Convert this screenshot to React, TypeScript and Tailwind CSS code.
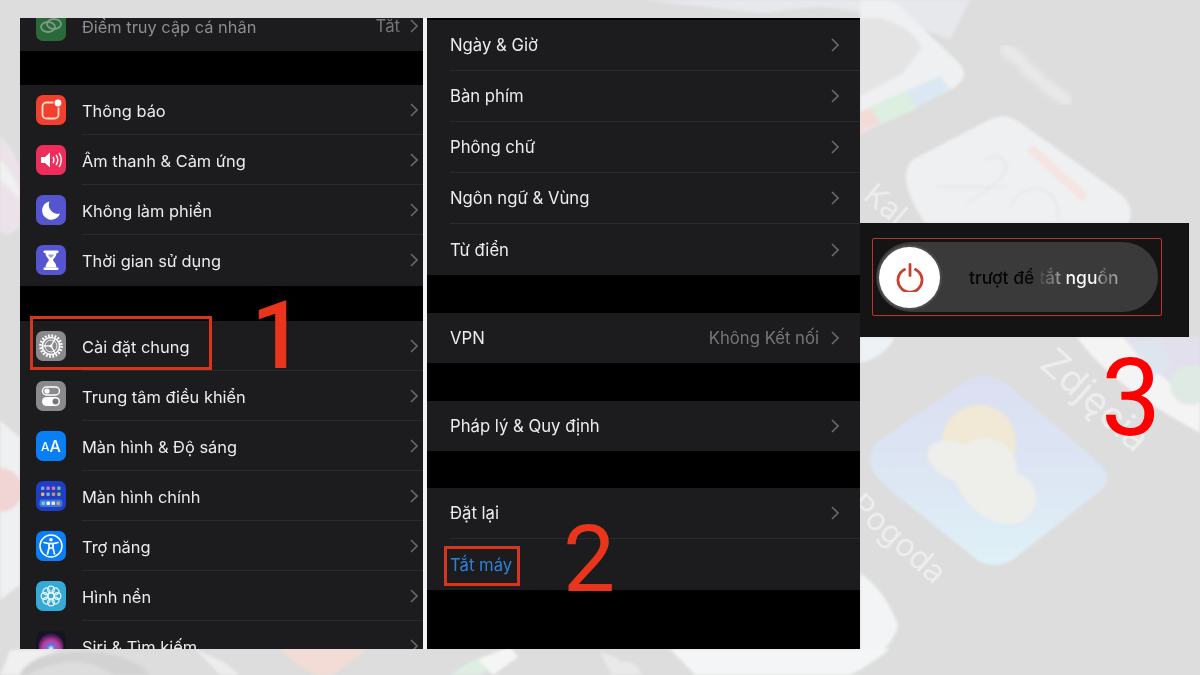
import React from "react";

const IconBox: React.FC<{ bg: string; children: React.ReactNode }> = ({ bg, children }) => (
	<svg viewBox="0 0 30 30" className="w-[30px] h-[30px] shrink-0">
		<rect width="30" height="30" rx="7" fill={bg} />
		{children}
	</svg>
);

const Chevron = () => (
	<svg viewBox="0 0 8 14" className="w-[8px] h-[14px] shrink-0" fill="none" stroke="#68686c" strokeWidth="1.6">
		<path d="M1 1l6 6-6 6" />
	</svg>
);

const HotspotIcon = () => (
	<IconBox bg="#2f8a47">
		<g fill="none" stroke="#a5d3b0" strokeWidth="1.8">
			<ellipse cx="12" cy="16" rx="7" ry="5" />
			<ellipse cx="18" cy="13" rx="7" ry="5" />
		</g>
	</IconBox>
);

const NotifyIcon = () => (
	<IconBox bg="#f2402e">
		<rect x="6.500" y="7.500" width="16" height="16" rx="4" fill="none" stroke="#ffd9d2" strokeWidth="1.800" />
		<circle cx="22" cy="8" r="4.600" fill="#f2402e" />
		<circle cx="22" cy="8" r="3.400" fill="#fff" />
	</IconBox>
);

const SoundIcon = () => (
	<IconBox bg="#ee2d5b">
		<path d="M5 12h4l5-4.500v15L9 18H5z" fill="#fff" />
		<g fill="none" stroke="#fff" strokeWidth="1.400">
			<path d="M17 12c1.200 1.800 1.200 4.200 0 6" />
			<path d="M20 10c2.200 3 2.200 7 0 10" />
			<path d="M23 8c3 4 3 10 0 14" />
		</g>
	</IconBox>
);

const MoonIcon = () => (
	<IconBox bg="#5655d0">
		<path d="M13.500 6.500A9.200 9.200 0 1 0 24 18.600 9 9 0 0 1 13.500 6.500z" fill="#fff" />
	</IconBox>
);

const HourglassIcon = () => (
	<IconBox bg="#5655d0">
		<rect x="7.500" y="5.500" width="15" height="2.400" rx="1" fill="#fff" />
		<rect x="7.500" y="22.500" width="15" height="2.400" rx="1" fill="#fff" />
		<path d="M9.500 8h11c0 4-3.400 5.500-3.400 7s3.400 3 3.400 7.500h-11c0-4.500 3.400-6 3.400-7.500S9.500 12 9.500 8z" fill="#fff" />
		<path d="M12 9.500h6c-.5 1.500-2 2.500-3 3.500-1-1-2.500-2-3-3.500z" fill="#9d9ce6" />
	</IconBox>
);

const GearIcon = () => (
	<IconBox bg="#8a8a8e">
		<circle cx="15" cy="15" r="10.500" fill="none" stroke="#fff" strokeWidth="2.600" strokeDasharray="1.800 1.500" />
		<circle cx="15" cy="15" r="8.600" fill="none" stroke="#fff" strokeWidth="1.500" />
		<circle cx="15" cy="15" r="6" fill="none" stroke="#fff" strokeWidth="0.900" />
		<g stroke="#fff" strokeWidth="1.300">
			<path d="M15 15H7" />
			<path d="M15 15l4-6.900" />
			<path d="M15 15l4 6.900" />
		</g>
		<circle cx="15" cy="15" r="1.500" fill="#fff" />
	</IconBox>
);

const ControlIcon = () => (
	<IconBox bg="#8a8a8e">
		<rect x="6.500" y="6" width="17" height="8" rx="4" fill="none" stroke="#fff" strokeWidth="1.400" />
		<circle cx="11" cy="10" r="2.600" fill="#fff" />
		<rect x="6" y="16" width="18" height="9" rx="4.500" fill="#fff" />
		<circle cx="19.500" cy="20.500" r="3" fill="#77777b" />
	</IconBox>
);

const DisplayIcon = () => (
	<div className="w-[30px] h-[30px] shrink-0 rounded-[7px] bg-[#0a7ff5] flex items-center justify-center text-white leading-none">
		<span className="text-[12px] font-medium mt-[2px]">A</span>
		<span className="text-[16px] font-medium">A</span>
	</div>
);

const HomeIcon = () => {
	const rows = [
		["#7fa8f0", "#c07ad8", "#e070b0", "#70c0a0"],
		["#f0b060", "#60c0d0", "#e08080", "#90c070"],
	];
	return (
		<IconBox bg="#1e3fc4">
			{rows.map((row, y) =>
				row.map((c, x) => <rect key={`${x}${y}`} x={5 + x * 5.4} y={5.5 + y * 6} width="3.400" height="3.400" rx="1" fill={c} />)
			)}
			<rect x="3.500" y="18.500" width="23" height="7.500" rx="2.500" fill="#3f78d8" />
			<rect x="5.500" y="20.500" width="3.500" height="3.500" rx="1" fill="#6fc8e8" />
			<rect x="10.500" y="20.500" width="3.500" height="3.500" rx="1" fill="#fff" />
			<rect x="15.500" y="20.500" width="3.500" height="3.500" rx="1" fill="#e8e8f0" />
			<rect x="20.500" y="20.500" width="3.500" height="3.500" rx="1" fill="#d0a080" />
		</IconBox>
	);
};

const AccessIcon = () => (
	<IconBox bg="#0a7ff5">
		<circle cx="15" cy="15" r="11" fill="none" stroke="#fff" strokeWidth="1.500" />
		<circle cx="15" cy="8.800" r="1.800" fill="#fff" />
		<path d="M8 11.500l5 1.200v4L11.500 23M22 11.500l-5 1.200v4L18.500 23M13 12.700h4M13.500 17h3" fill="none" stroke="#fff" strokeWidth="1.700" strokeLinecap="round" />
	</IconBox>
);

const WallpaperIcon = () => (
	<IconBox bg="#35a9d8">
		<g fill="none" stroke="#e6f7fb" strokeWidth="1.200">
			<circle cx="15" cy="15" r="3" />
			{[0, 45, 90, 135, 180, 225, 270, 315].map((a) => (
				<circle key={a} cx="15" cy="8.500" r="3.300" transform={`rotate(${a} 15 15)`} />
			))}
		</g>
	</IconBox>
);

const SiriIcon = () => (
	<svg viewBox="0 0 30 30" className="w-[30px] h-[30px] shrink-0">
		<defs>
			<radialGradient id="siri" cx="50%" cy="60%" r="55%">
				<stop offset="0%" stopColor="#ffffff" />
				<stop offset="25%" stopColor="#5a7ae0" />
				<stop offset="60%" stopColor="#c03aa0" />
				<stop offset="100%" stopColor="#3a1a50" />
			</radialGradient>
		</defs>
		<rect width="30" height="30" rx="7" fill="#17141f" />
		<circle cx="15" cy="15" r="12.500" fill="url(#siri)" />
	</svg>
);

const Row: React.FC<{
	icon?: React.ReactNode;
	label: string;
	value?: string;
	dim?: boolean;
	blue?: boolean;
	last?: boolean;
	height?: string;
	right?: boolean;
}> = ({ icon, label, value, dim, blue, last, height, right }) => (
	<div className={`flex items-center ${height ?? "h-[50px]"} ${right ? "pl-[23px]" : "pl-[16px]"}`}>
		{icon && <div className={`mr-[16px] ${dim ? "opacity-70" : ""}`}>{icon}</div>}
		<div
			className={`flex-1 h-full flex items-center border-[#2b2b2d] ${last ? "" : "border-b"} ${right ? "pr-[21px]" : "pr-[5px]"}`}
		>
			<span
				className={`flex-1 whitespace-nowrap ${right ? "pt-[2px] text-[16.7px]" : "pt-[3px] text-[16.4px]"} ${
					blue ? "text-[#2f80d8]" : dim ? "text-[#8e8e8e]" : "text-[#ececec]"
				}`}
			>
				{label}
			</span>
			{value && <span className={`pt-[2px] text-[16.7px] text-[#77777a] ${right ? "mr-[12px]" : "mr-[10px]"}`}>{value}</span>}
			{!blue && <Chevron />}
		</div>
	</div>
);

const Wallpaper = () => (
	<svg viewBox="0 0 1200 675" className="absolute inset-0 w-[1200px] h-[675px]">
		<defs>
			<filter id="soft"><feGaussianBlur stdDeviation="1.500" /></filter>
			<filter id="softer"><feGaussianBlur stdDeviation="3" /></filter>
			<linearGradient id="weather" x1="0.500" y1="0" x2="0.500" y2="1">
				<stop offset="0%" stopColor="#dbdff2" />
				<stop offset="55%" stopColor="#dde6f3" />
				<stop offset="100%" stopColor="#dff1f7" />
			</linearGradient>
		</defs>
		<g filter="url(#soft)">
			{/* top */}
			<path d="M640 0h330l-20 40-60-25-70-8-60 6z" fill="#e6e8ec" />
			{/* app with colour bars */}
			<path d="M860 0h33l65 62q14 14 -4 26L860 134z" fill="#eef0f1" />
			<path d="M860 18h20q34 10 42 30 l-20 26L860 96z" fill="#e4e4e5" />
			<path d="M860 112l11-5 14 14-25 12z" fill="#f3dcd8" />
			<path d="M870 107l36-16 12 17-36 16z" fill="#dcefe0" />
			<path d="M906 91l34-15 10 13-34 18z" fill="#dbe8f3" />
			{/* calendar */}
			<path d="M912 160 L985 122 Q1005 110 1022 124 L1122 195 Q1136 210 1128 223 L925 223 Q895 178 912 160z" fill="#eff0f1" />
			<path d="M1030 148l55 50" stroke="#f5e4e1" strokeWidth="9" />
			<path d="M936 187l70 0M985 160q18 -10 22 8q-5 15 -40 35M1012 205a22 22 0 1 1 45 15" fill="none" stroke="#e3e6e8" strokeWidth="2" />
			{/* photos ring */}
			<path d="M1077 337 Q1110 385 1200 433 V400 Q1165 385 1123 337z" fill="#f4f4f4" />
			<path d="M1123 337 Q1165 385 1200 402 V337z" fill="#e2e0ec" />
			<path d="M1130 345l30 -8 12 30 -20 10z" fill="#dfe5ef" />
			<circle cx="1190" cy="385" r="20" fill="#dfeae4" />
			<path d="M860 337h35q-10 20 -35 26z" fill="#eff2f4" />
			{/* weather */}
			<path d="M880 440 L965 382 Q985 368 1008 385 L1098 462 Q1118 480 1095 495 L1015 558 Q998 570 980 562 L890 490 Q856 462 880 440z" fill="url(#weather)" />
			<circle cx="979" cy="442" r="37" fill="#f1e8d5" />
			<g fill="#eeeeea">
				<ellipse cx="958" cy="462" rx="32" ry="19" transform="rotate(22 958 462)" />
				<circle cx="985" cy="470" r="32" />
				<ellipse cx="990" cy="494" rx="38" ry="22" transform="rotate(40 990 494)" />
				<circle cx="1010" cy="498" r="26" />
			</g>
			{/* bottom right app */}
			<path d="M860 573 Q885 590 898 625 Q895 645 860 670z" fill="#f2f4f5" />
			<path d="M670 649 H890 Q870 665 850 675 H695z" fill="#f3f5f6" />
			<path d="M600 652 q14 4 22 10 q14 -2 20 13 h-30z" fill="#ececec" opacity="0.800" />
			{/* left strip */}
			<path d="M0 135 Q14 150 20 168 V225 Q10 240 0 232z" fill="#ece3ea" />
			<path d="M0 160 Q10 170 20 190 V200 Q8 185 0 180z" fill="#f1f1f1" />
			<path d="M0 420 L20 438 V585 L0 600z" fill="#eff0f1" />
			<circle cx="0" cy="490" r="22" fill="#f1d4d4" />
			{/* bottom strip */}
			<path d="M0 675 Q35 650 100 652 Q140 660 150 675 H115 Q90 660 70 662 Q40 665 30 675z" fill="#d2d2d2" />
			<path d="M0 675 Q5 665 10 650h50Q25 660 20 675z" fill="#f0f0f0" />
			<path d="M278 649h90l-35 26h-20z" fill="#f3dcd5" />
			<path d="M195 649l30 14 15 12h-20z" fill="#ededed" />
			<path d="M450 675l25-16 30 0 -25 16z" fill="#dcefe2" />
			<path d="M478 659l32-12 8 10-25 18z" fill="#f5f5f5" />
		</g>
		<path d="M1006 50l14 10M1026 68l12 10M1046 86l20 14" stroke="#e9e9e9" strokeWidth="13" strokeLinecap="round" filter="url(#softer)" />
		<g fill="#ededed" fontFamily="Inter, sans-serif">
			<text x="1038" y="366" fontSize="38" transform="rotate(42 1038 366)">Zdjęcia</text>
			<text x="862" y="198" fontSize="30" transform="rotate(40 862 198)">Kal</text>
			<text x="848" y="508" fontSize="32" transform="rotate(42 848 508)">Pogoda</text>
		</g>
	</svg>
);

const App: React.FC = () => {
	return (
		<div className="relative w-[1200px] h-[675px] overflow-hidden bg-[#dddddd] font-['Inter',sans-serif]">
			<Wallpaper />

			<div className="relative flex items-start pt-[18px] pl-[20px]">
				{/* step 1 */}
				<div className="w-[403px] h-[631px] overflow-hidden bg-black blur-[0.4px]">
					<div className="-mt-[18px] bg-[#1c1c1e]">
						<Row icon={<HotspotIcon />} label="Điểm truy cập cá nhân" value="Tắt" dim last height="h-[51px]" />
					</div>
					<div className="mt-[34px] bg-[#1c1c1e] h-[201px]">
						<Row icon={<NotifyIcon />} label="Thông báo" />
						<Row icon={<SoundIcon />} label="Âm thanh & Cảm ứng" />
						<Row icon={<MoonIcon />} label="Không làm phiền" />
						<Row icon={<HourglassIcon />} label="Thời gian sử dụng" last />
					</div>
					<div className="mt-[35px] bg-[#1c1c1e]">
						<Row icon={<GearIcon />} label="Cài đặt chung" />
						<Row icon={<ControlIcon />} label="Trung tâm điều khiển" />
						<Row icon={<DisplayIcon />} label="Màn hình & Độ sáng" />
						<Row icon={<HomeIcon />} label="Màn hình chính" />
						<Row icon={<AccessIcon />} label="Trợ năng" />
						<Row icon={<WallpaperIcon />} label="Hình nền" />
						<Row icon={<SiriIcon />} label="Siri & Tìm kiếm" last />
					</div>
				</div>

				<div className="w-[4px] h-[631px] bg-[#f2f2f2]" />

				{/* step 2 */}
				<div className="w-[433px] h-[631px] overflow-hidden bg-black pt-[2px] blur-[0.4px]">
					<div className="bg-[#1c1c1e]">
						<Row right height="h-[51px]" label="Ngày & Giờ" />
						<Row right height="h-[51px]" label="Bàn phím" />
						<Row right height="h-[51px]" label="Phông chữ" />
						<Row right height="h-[51px]" label="Ngôn ngữ & Vùng" />
						<Row right height="h-[51px]" label="Từ điển" last />
					</div>
					<div className="mt-[38px] bg-[#1c1c1e]">
						<Row right label="VPN" value="Không Kết nối" last />
					</div>
					<div className="mt-[38px] bg-[#1c1c1e]">
						<Row right label="Pháp lý & Quy định" last />
					</div>
					<div className="mt-[37px] bg-[#1c1c1e]">
						<Row right height="h-[51px]" label="Đặt lại" />
						<Row right height="h-[51px]" label="Tắt máy" blue last />
					</div>
				</div>

				{/* step 3 */}
				<div className="mt-[205px] w-[329px] h-[114px] bg-[#141414] pl-[12px] pt-[15px]">
					<div className="w-[290px] h-[78px] border border-[#b8392b] rounded-[2px] pl-[3px] pt-[3px]">
						<div className="w-[282px] h-[70px] rounded-full bg-[#3a3a3a] flex items-center pl-[3px]">
							<div className="w-[61px] h-[61px] rounded-full bg-white shadow-[0_0_0_2px_#4d4d4d] flex items-center justify-center shrink-0">
								<svg viewBox="0 0 30 30" className="w-[30px] h-[30px]" fill="none" stroke="#c9402f" strokeWidth="2.800" strokeLinecap="round">
									<path d="M9.500 7.500a12 12 0 1 0 11 0" />
									<path d="M15 2.500v11" />
								</svg>
							</div>
							<span className="ml-[29px] pt-[2px] text-[17.500px] font-medium whitespace-nowrap text-transparent bg-clip-text bg-[linear-gradient(90deg,#030303_0%,#080808_44%,#5a5a5a_49%,#7c7c7c_56%,#999_60%,#fff_66%,#fff_84%,#6e6e6e_90%,#aaa_100%)]">
								trượt để tắt nguồn
							</span>
						</div>
					</div>
				</div>
			</div>

			{/* annotations */}
			<div className="absolute left-[30px] top-[316px] w-[182px] h-[54px] border-[3px] border-[#d8351d]" />
			<div className="absolute left-[444px] top-[546px] w-[76px] h-[40px] border-[3px] border-[#d8351d]" />
			<span className="absolute left-[251px] top-[279px] text-[94px] leading-[115px] text-[#e8351c] font-['Roboto',sans-serif] font-medium">1</span>
			<span className="absolute left-[563px] top-[502px] text-[93px] leading-[115px] text-[#e8351c] font-['Roboto',sans-serif]">2</span>
			<span className="absolute left-[1101px] top-[339px] text-[107px] leading-[120px] text-[#ff0000] font-['Roboto',sans-serif]">3</span>
		</div>
	);
};

export default App;
